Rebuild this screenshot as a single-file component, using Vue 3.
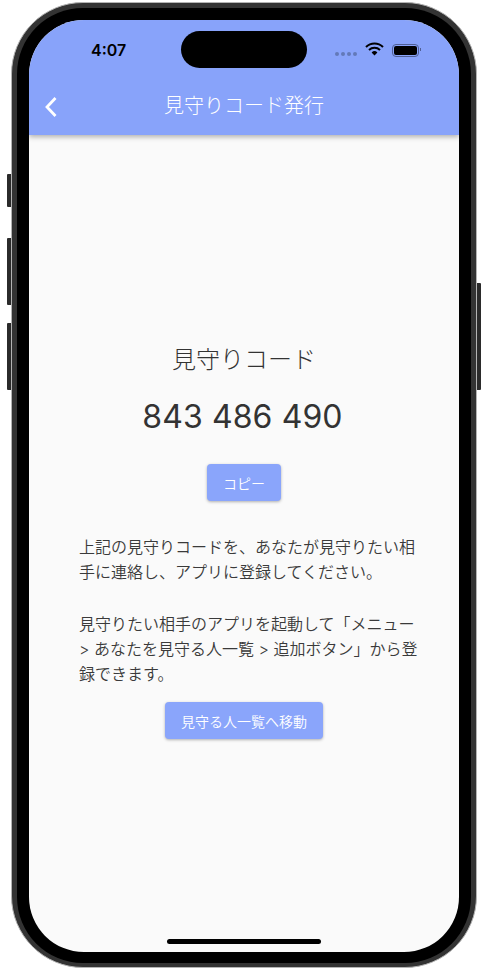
<script setup>
const title = '見守りコード発行'
const code = '843 486 490'
</script>

<template>
  <div class="page">
    <div class="phone">
      <span class="side side-mute" />
      <span class="side side-up" />
      <span class="side side-down" />
      <span class="side side-power" />
      <div class="bezel">
        <div class="screen">
          <span class="island" />
          <header class="app-header">
            <div class="status-bar">
              <span class="time">4:07</span>
              <div class="status-icons">
                <div class="signal">
                  <i /><i /><i /><i />
                </div>
                <svg class="wifi" width="19" height="14" viewBox="0 0 19 14">
                  <path d="M1 5 A12 12 0 0 1 18 5" fill="none" stroke="#000" stroke-width="2" />
                  <path d="M4 8 A8 8 0 0 1 15 8" fill="none" stroke="#000" stroke-width="2" />
                  <path d="M9.5 13.5 L6.6 10.4 A4.2 4.2 0 0 1 12.4 10.4 Z" fill="#000" />
                </svg>
                <div class="battery">
                  <span class="battery-level" />
                </div>
              </div>
            </div>
            <div class="nav-bar">
              <svg class="back" width="14" height="22" viewBox="0 0 14 22">
                <path d="M11.5 2 L3 11 L11.5 20" fill="none" stroke="#fff" stroke-width="2.8" />
              </svg>
              <h1 class="nav-title">{{ title }}</h1>
            </div>
          </header>
          <main class="content">
            <h2 class="code-label">見守りコード</h2>
            <p class="code">{{ code }}</p>
            <button class="btn">コピー</button>
            <div class="description">
              <p>上記の見守りコードを、あなたが見守りたい相手に連絡し、アプリに登録してください。</p>
              <p>見守りたい相手のアプリを起動して「メニュー &gt; あなたを見守る人一覧 &gt; 追加ボタン」から登録できます。</p>
            </div>
            <button class="btn">見守る人一覧へ移動</button>
          </main>
          <span class="home-bar" />
        </div>
      </div>
    </div>
  </div>
</template>

<style>
html,
body {
  margin: 0;
  background: #fff;
}
</style>

<style scoped>
.page {
  width: 488px;
  height: 972px;
  padding: 2px 0 0 11px;
  box-sizing: border-box;
  font-family: Inter, "Noto Sans CJK JP", sans-serif;
}

.phone {
  position: relative;
  width: 466px;
  height: 966px;
  box-sizing: border-box;
  border: 1px solid #b4b4b4;
  border-radius: 72px;
  padding: 5px 5px 4px;
  background: #333;
}

.side {
  position: absolute;
  width: 4px;
  background: #2b2b2b;
}

.side-mute {
  left: -5px;
  top: 171px;
  height: 33px;
  border-radius: 1px 0 0 1px;
}

.side-up {
  left: -5px;
  top: 235px;
  height: 67px;
  border-radius: 1px 0 0 1px;
}

.side-down {
  left: -5px;
  top: 320px;
  height: 67px;
  border-radius: 1px 0 0 1px;
}

.side-power {
  right: -5px;
  top: 280px;
  height: 107px;
  border-radius: 0 1px 1px 0;
}

.bezel {
  height: 100%;
  box-sizing: border-box;
  border-radius: 66px;
  padding: 12px 12px 11px;
  background: #000;
}

.screen {
  position: relative;
  display: flex;
  flex-direction: column;
  height: 100%;
  border-radius: 55px;
  overflow: hidden;
  background: #fafafa;
}

.island {
  position: absolute;
  left: 152px;
  top: 11px;
  width: 126px;
  height: 37px;
  border-radius: 19px;
  background: #000;
  z-index: 2;
}

.app-header {
  position: relative;
  height: 115px;
  flex-shrink: 0;
  background: #88a3fa;
  box-shadow: 0 2px 5px rgba(0, 0, 0, 0.3);
  z-index: 1;
}

.status-bar {
  display: flex;
  justify-content: space-between;
  align-items: center;
  height: 60px;
  padding: 0 40px 0 62px;
}

.time {
  font-family: Inter, sans-serif;
  font-size: 16px;
  font-weight: 600;
  color: #000;
}

.status-icons {
  display: flex;
  align-items: center;
  gap: 8px;
}

.signal {
  display: flex;
  gap: 2px;
  margin-top: 8px;
}

.signal i {
  width: 4px;
  height: 4px;
  border-radius: 50%;
  background: #6379b8;
}

.wifi {
  margin-top: -2px;
}

.battery {
  position: relative;
  width: 23px;
  height: 9px;
  border: 1px solid #4f5f95;
  border-radius: 4px;
  padding: 1px;
}

.battery::after {
  content: "";
  position: absolute;
  right: -3px;
  top: 3px;
  width: 1px;
  height: 3px;
  background: #4f5f95;
}

.battery-level {
  display: block;
  height: 100%;
  border-radius: 2px;
  background: #000;
}

.nav-bar {
  position: relative;
  display: flex;
  justify-content: center;
  align-items: center;
  height: 53px;
}

.back {
  position: absolute;
  left: 15px;
  top: 16px;
}

.nav-title {
  margin: 0;
  font-size: 20px;
  font-weight: 300;
  line-height: 53px;
  color: #fff;
}

.content {
  flex: 1;
  display: flex;
  flex-direction: column;
  align-items: center;
  justify-content: center;
  padding-bottom: 6px;
  color: #333;
}

.code-label {
  margin: 0;
  font-size: 24px;
  font-weight: 300;
  line-height: 36px;
}

.code {
  margin: 19px 3px 0 0;
  font-size: 32px;
  line-height: 40px;
  letter-spacing: 0.1px;
}

.btn {
  display: block;
  min-width: 73px;
  height: 37px;
  border: 0;
  border-radius: 4px;
  padding: 0 16px;
  font-family: inherit;
  font-size: 14px;
  font-weight: 350;
  color: #fff;
  background: #8aa5fb;
  box-shadow: 0 1px 3px rgba(0, 0, 0, 0.3);
}

.content .btn:nth-of-type(1) {
  margin-top: 27px;
}

.description {
  width: 342px;
  margin: 34px 0 15px 12px;
  font-size: 16px;
  font-weight: 350;
  line-height: 25px;
  color: #3a3a3a;
}

.description p {
  margin: 0;
}

.description p + p {
  margin-top: 27px;
}

.home-bar {
  position: absolute;
  left: 138px;
  bottom: 8px;
  width: 154px;
  height: 5px;
  border-radius: 3px;
  background: #000;
}
</style>
